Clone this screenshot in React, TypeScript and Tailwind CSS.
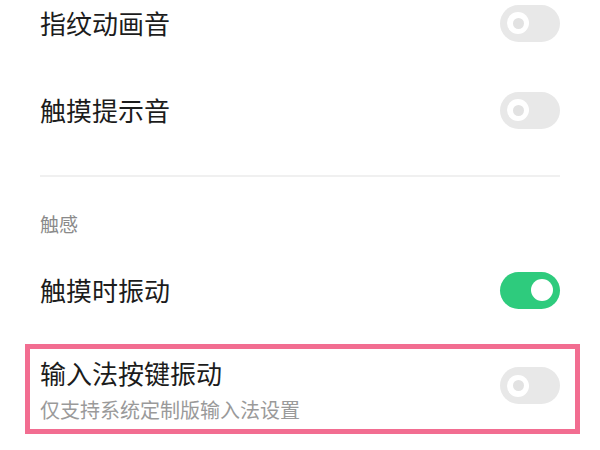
import React from 'react';

type ToggleProps = { on?: boolean };

function Toggle({ on = false }: ToggleProps) {
  return (
    <div
      className={`relative h-[37px] w-[60px] shrink-0 rounded-full ${on ? 'bg-[#2ecb7d]' : 'bg-[#e8e8e8]'}`}
    >
      {on ? (
        <span className="absolute right-[7px] top-[7.5px] h-[22px] w-[22px] rounded-full bg-white" />
      ) : (
        <span className="absolute left-[7px] top-[7.5px] flex h-[22px] w-[22px] items-center justify-center rounded-full bg-white">
          <span className="h-[11px] w-[11px] rounded-full bg-[#e2e2e2]" />
        </span>
      )}
    </div>
  );
}

function Row({ title, on }: { title: string; on?: boolean }) {
  return (
    <div className="flex h-[46px] items-center justify-between pl-[40px] pr-[40px]">
      <span className="text-[26px] leading-[32px] text-[#1c1c1c]">{title}</span>
      <Toggle on={on} />
    </div>
  );
}

export default function App() {
  return (
    <div
      className="h-[450px] w-[600px] overflow-hidden bg-white"
      style={{ fontFamily: '"Noto Sans CJK SC", "Noto Sans", sans-serif' }}
    >
      <Row title="指纹动画音" />
      <div className="mt-[41px]">
        <Row title="触摸提示音" />
      </div>

      {/* divider */}
      <div className="mx-[40px] mt-[42px] h-[2px] bg-[#f0f0f0]" />

      <div className="mt-[35px] pl-[40px] text-[19px] leading-[24px] text-[#8a8a8a]">触感</div>

      <div className="mt-[31px]">
        <Row title="触摸时振动" on />
      </div>

      {/* highlighted row */}
      <div className="ml-[25px] mt-[31px] flex h-[90px] w-[555px] items-start justify-between border-[5px] border-[#f26d91] pl-[10px] pr-[15px]">
        <div className="flex flex-col pt-[8px]">
          <span className="text-[26px] leading-[32px] text-[#1c1c1c]">输入法按键振动</span>
          <span className="mt-[9px] text-[20px] leading-[24px] text-[#9a9a9a]">仅支持系统定制版输入法设置</span>
        </div>
        <div className="mt-[18px]">
          <Toggle />
        </div>
      </div>
    </div>
  );
}
